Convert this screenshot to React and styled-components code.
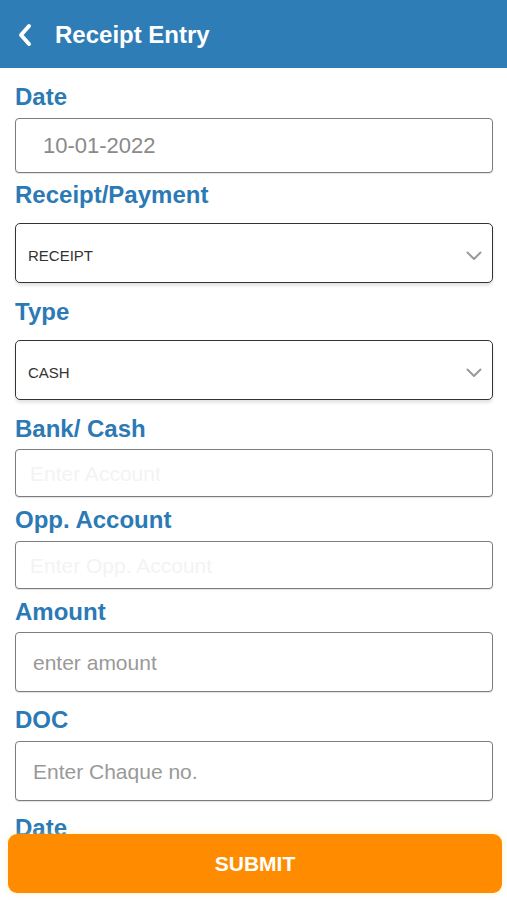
import React from "react";
import styled, { createGlobalStyle } from "styled-components";

const Global = createGlobalStyle`
  html, body { margin: 0; padding: 0; background: #fff; }
  body { font-family: "Liberation Sans", Arial, sans-serif; }
  * { box-sizing: border-box; }
`;

const Page = styled.div`
  position: relative;
  width: 507px;
  height: 900px;
  overflow: hidden;
  background: #fff;
`;

const Header = styled.header`
  height: 68px;
  background: #2e7db7;
  display: flex;
  align-items: center;
  padding-left: 17px;
  gap: 22px;
  color: #fff;
`;

const BackButton = styled.button`
  display: flex;
  align-items: center;
  padding: 0;
  margin: 0;
  border: none;
  background: none;
  width: 16px;
  height: 24px;
  margin-top: 2px;
`;

const Title = styled.h1`
  margin: 2px 0 0;
  font-size: 24px;
  font-weight: 700;
  color: #fff;
  letter-spacing: 0;
`;

const Form = styled.div`
  display: flex;
  flex-direction: column;
  padding: 0 14px 0 15px;
`;

const Label = styled.label`
  display: block;
  font-size: 24px;
  line-height: 26px;
  height: 26px;
  font-weight: 700;
  color: #2b7ab5;
  margin-top: ${(p) => p.$top}px;
  margin-bottom: ${(p) => p.$bottom}px;
`;

const TextBox = styled.div`
  height: ${(p) => p.$h}px;
  border: 1.5px solid #7d7d7d;
  border-radius: 4px;
  box-shadow: 0 1px 1px rgba(0, 0, 0, 0.12);
  display: flex;
  align-items: center;
  padding-left: ${(p) => p.$pad}px;
  padding-top: 1px;
  font-size: ${(p) => p.$size}px;
  color: ${(p) => p.$color};
  background: #fff;
`;

const SelectBox = styled.div`
  height: 60px;
  border: 1.5px solid #333;
  border-radius: 5px;
  box-shadow: 0 3px 3px rgba(0, 0, 0, 0.1);
  display: flex;
  align-items: center;
  justify-content: space-between;
  padding: 5px 10px 0 12px;
  font-size: 15px;
  color: #333;
  background: #fff;
`;

const Submit = styled.button`
  position: absolute;
  left: 8px;
  right: 5px;
  bottom: 7px;
  height: 59px;
  border: none;
  border-radius: 9px;
  background: #ff8c00;
  color: #fff;
  font-family: "Liberation Sans", Arial, sans-serif;
  font-size: 21px;
  font-weight: 700;
  box-shadow: 0 0 6px rgba(255, 230, 140, 0.5);
`;

const Chevron = () => (
  <svg width="16" height="10" viewBox="0 0 16 10">
    <path d="M1.5 1.5 L8 8 L14.5 1.5" fill="none" stroke="#9a9a9a" strokeWidth="2" strokeLinecap="round" strokeLinejoin="round" />
  </svg>
);

const BackIcon = () => (
  <svg width="16" height="24" viewBox="0 0 16 24">
    <path d="M12 3 L4 12 L12 21" fill="none" stroke="#fff" strokeWidth="4" strokeLinecap="round" strokeLinejoin="round" />
  </svg>
);

export default function App() {
  return (
    <Page>
      <Global />
      <Header>
        <BackButton aria-label="Back">
          <BackIcon />
        </BackButton>
        <Title>Receipt Entry</Title>
      </Header>
      <Form>
        <Label $top={16} $bottom={8}>Date</Label>
        <TextBox $h={55} $pad={27} $size={22} $color="#8a8a8a">10-01-2022</TextBox>

        <Label $top={9} $bottom={15}>Receipt/Payment</Label>
        <SelectBox>
          <span>RECEIPT</span>
          <Chevron />
        </SelectBox>

        <Label $top={16} $bottom={15}>Type</Label>
        <SelectBox>
          <span>CASH</span>
          <Chevron />
        </SelectBox>

        <Label $top={16} $bottom={7}>Bank/ Cash</Label>
        <TextBox $h={48} $pad={14} $size={21} $color="#f3f3f3">Enter Account</TextBox>

        <Label $top={10} $bottom={8}>Opp. Account</Label>
        <TextBox $h={48} $pad={14} $size={21} $color="#f3f3f3">Enter Opp. Account</TextBox>

        <Label $top={10} $bottom={7}>Amount</Label>
        <TextBox $h={60} $pad={17} $size={21} $color="#999">enter amount</TextBox>

        <Label $top={15} $bottom={8}>DOC</Label>
        <TextBox $h={60} $pad={17} $size={21} $color="#999">Enter Chaque no.</TextBox>

        <Label $top={14} $bottom={8}>Date</Label>
      </Form>
      <Submit>SUBMIT</Submit>
    </Page>
  );
}
